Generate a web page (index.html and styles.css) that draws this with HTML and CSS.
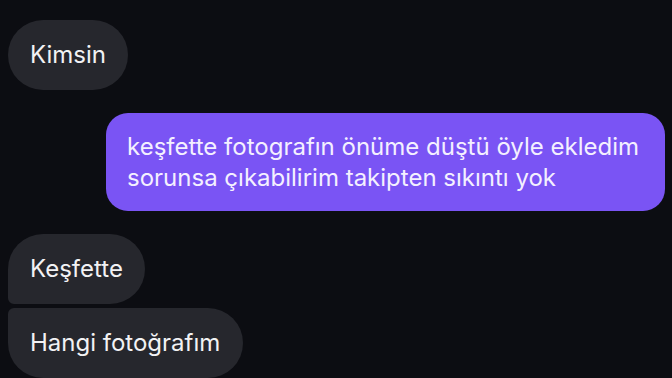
FILE: index.html
```html
<!DOCTYPE html>
<html lang="tr">
<head>
  <meta charset="UTF-8">
  <title>Mesajlar</title>
  <link rel="stylesheet" href="styles.css">
</head>
<body>
  <div class="chat">
    <div class="msg in single">Kimsin</div>
    <div class="msg out">keşfette fotografın önüme düştü öyle ekledim<br>sorunsa çıkabilirim takipten sıkıntı yok</div>
    <div class="group">
      <div class="msg in first">Keşfette</div>
      <div class="msg in last">Hangi fotoğrafım</div>
    </div>
  </div>
</body>
</html>
```

FILE: styles.css
```css
html,body{
  margin: 0;
  padding: 0;
}
body {
  width: 672px;
  height: 378px;
  overflow: hidden;
  background: #0c0d12;
  font-family: Inter, "Noto Sans", sans-serif;
  color: #f2f2f4;
}
.chat {
  display: flex;
  flex-direction: column;
  align-items: flex-start;
  gap: 23px;
  padding: 20px 7px 0 8px;
}
.group {
  display: flex;
  flex-direction: column;
  align-items: flex-start;
  gap: 4px;
}
.msg {
  font-size: 24px;
  line-height: 30px;
  box-sizing: border-box;
}
.msg.in {
  background: #26272d;
  height: 70px;
  padding: 20px 22px;
  border-radius: 35px;
}
.msg.in.first {
  border-bottom-left-radius: 6px;
}
.msg.in.last {
  border-top-left-radius: 6px;
  width: 235px;
}
.msg.out {
  align-self: flex-end;
  background: #7a54f4;
  color: #f4f0ff;
  width: 559px;
  height: 98px;
  padding: 18px 21px;
  border-radius: 22px;
  line-height: 31px;
}
```
